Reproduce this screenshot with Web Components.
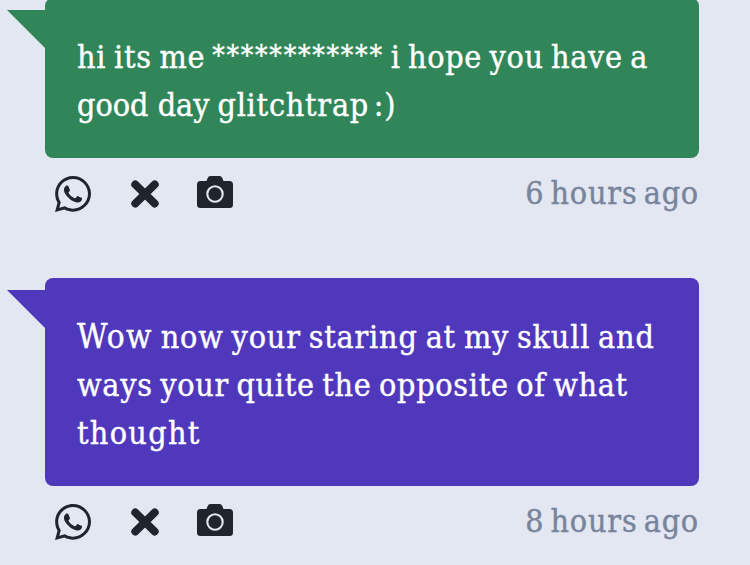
<!DOCTYPE html>
<html lang="en">
<head>
<meta charset="utf-8">
<title>Messages</title>
<style>
    body {
        margin: 0;
        height: 565px;
        overflow: hidden;
        background: #e2e7f1;
        font-family: 'DejaVu Serif Condensed', 'DejaVu Serif', serif;
        font-stretch: condensed;
        font-size: 32px;
        line-height: 48px;
    }
</style>
</head>
<body>
<message-list>
    <message-card time="6 hours ago" style="--bubble: #308658">
        <text-line><text-run ls="0.7" ws="-2">hi its me</text-run><text-run ls="1.7" size="28" lead="7" rise="1">************</text-run><text-run ls="0.7" ws="-2.5" lead="7">i hope you have a</text-run></text-line>
        <text-line><text-run>good day</text-run><text-run ls="0.75" ws="-5" lead="8">glitchtrap :)</text-run></text-line>
    </message-card>
    <message-card time="8 hours ago" style="--bubble: #5038bd">
        <text-line><text-run ls="1.4" size="33">Wow</text-run><text-run ls="0.8" ws="-2" lead="8">now your staring at my skull and</text-run></text-line>
        <text-line><text-run ls="0.7" ws="-2.3">ways your quite the opposite of what</text-run></text-line>
        <text-line><text-run ls="1.3">thought</text-run></text-line>
    </message-card>
</message-list>

<script>
const ICONS = {
    whatsapp: `
        <svg width="36" height="36" viewBox="0 32 448 448">
            <path d="M380.9 97.1C339 55.1 283.2 32 223.9 32c-122.4 0-222 99.6-222 222 0 39.1 10.2 77.3 29.6 111L0 480l117.7-30.9c32.4 17.7 68.9 27 106.1 27h.1c122.3 0 224.1-99.6 224.1-222 0-59.3-25.2-115-67.1-157zm-157 341.6c-33.2 0-65.7-8.9-94-25.7l-6.7-4-69.8 18.3L72 359.2l-4.4-7c-18.5-29.4-28.2-63.3-28.2-98.2 0-101.7 82.8-184.5 184.6-184.5 49.3 0 95.6 19.2 130.4 54.1 34.8 34.9 56.2 81.2 56.1 130.5 0 101.8-84.9 184.6-186.6 184.6z"/>
            <path d="M325.1 300.5c-5.5-2.8-32.8-16.2-37.9-18-5.1-1.9-8.8-2.8-12.5 2.8-3.7 5.6-14.3 18-17.6 21.8-3.2 3.7-6.5 4.2-12 1.4-32.6-16.3-54-29.1-75.5-66-5.7-9.8 5.7-9.1 16.3-30.3 1.8-3.7.9-6.9-.5-9.7-1.4-2.8-12.5-30.1-17.1-41.2-4.5-10.8-9.1-9.3-12.5-9.5-3.2-.2-6.9-.2-10.6-.2-3.7 0-9.7 1.4-14.8 6.9-5.1 5.6-19.4 19-19.4 46.3 0 27.3 19.9 53.7 22.6 57.4 2.8 3.7 39.1 59.7 94.8 83.8 35.2 15.2 49 16.5 66.6 13.9 10.7-1.6 32.8-13.4 37.4-26.4 4.6-13 4.6-24.1 3.2-26.4-1.3-2.5-5-3.9-10.5-6.6z"/>
        </svg>`,
    cross: `
        <svg width="30" height="36" viewBox="0 0 30 36">
            <path d="M5.2 8.4 24.8 27.6M24.8 8.4 5.2 27.6" fill="none" stroke="currentColor" stroke-width="7.8" stroke-linecap="round"/>
        </svg>`,
    camera: `
        <svg width="36" height="32" viewBox="0 0 36 32">
            <path d="M3.5 5H9.5l1.2-3A3 3 0 0 1 13.5 0h9a3 3 0 0 1 2.8 2l1.2 3h6A3.5 3.5 0 0 1 36 8.5v20a3.5 3.5 0 0 1-3.5 3.5h-29A3.5 3.5 0 0 1 0 28.5v-20A3.5 3.5 0 0 1 3.5 5z"/>
            <circle cx="18" cy="18" r="7.7" fill="none" stroke="#e2e7f1" stroke-width="2.1"/>
        </svg>`
};

class ShareIcon extends HTMLElement {
    constructor() {
        super();
        this.attachShadow({ mode: 'open' });
    }

    connectedCallback() {
        this.shadowRoot.innerHTML = `
            <style>
                :host { display: block; color: #20242c; }
                svg { display: block; fill: currentColor; }
            </style>
            ${ICONS[this.getAttribute('name')]}
        `;
    }
}

// A piece of a line with its own tracking
class TextRun extends HTMLElement {
    constructor() {
        super();
        this.attachShadow({ mode: 'open' });
    }

    connectedCallback() {
        const value = (name, fallback) => this.getAttribute(name) || fallback;
        this.shadowRoot.innerHTML = `
            <style>
                :host {
                    display: block;
                    white-space: nowrap;
                    margin-left: ${value('lead', 0)}px;
                    padding-bottom: ${value('rise', 0)}px;
                    margin-top: -${value('rise', 0)}px;
                    font-size: ${value('size', 32)}px;
                    letter-spacing: ${value('ls', 0)}px;
                    word-spacing: ${value('ws', 0)}px;
                    -webkit-text-stroke: 0.4px currentColor;
                }
            </style>
            <slot></slot>
        `;
    }
}

class TextLine extends HTMLElement {
    constructor() {
        super();
        this.attachShadow({ mode: 'open' });
        this.shadowRoot.innerHTML = `
            <style>
                :host { display: flex; height: 48px; }
            </style>
            <slot></slot>
        `;
    }
}

class MessageCard extends HTMLElement {
    constructor() {
        super();
        this.attachShadow({ mode: 'open' });
    }

    connectedCallback() {
        this.shadowRoot.innerHTML = `
            <style>
                :host { display: block; }

                .bubble {
                    position: relative;
                    padding: 35px 32px 29px;
                    border-radius: 8px;
                    background: var(--bubble);
                    color: #fff;
                }

                .bubble::before {
                    content: '';
                    position: absolute;
                    top: 12px;
                    left: -38px;
                    width: 38px;
                    height: 38px;
                    background: var(--bubble);
                    clip-path: polygon(0 0, 100% 0, 100% 100%);
                }

                footer {
                    display: flex;
                    align-items: flex-start;
                    height: 47px;
                    padding: 11px 0 0 10px;
                }

                .icons {
                    display: flex;
                    gap: 37px;
                    padding-top: 7px;
                }

                .icons share-icon:first-child { margin-right: 2px; }

                time {
                    margin-left: auto;
                    color: #78849b;
                }
            </style>

            <div class="bubble"><slot></slot></div>
            <footer>
                <div class="icons">
                    <share-icon name="whatsapp"></share-icon>
                    <share-icon name="cross"></share-icon>
                    <share-icon name="camera"></share-icon>
                </div>
                <time><text-run ls="0.8" ws="-3.7">${this.getAttribute('time')}</text-run></time>
            </footer>
        `;
    }
}

class MessageList extends HTMLElement {
    constructor() {
        super();
        this.attachShadow({ mode: 'open' });
        this.shadowRoot.innerHTML = `
            <style>
                :host {
                    display: flex;
                    flex-direction: column;
                    gap: 62px;
                    width: 654px;
                    margin: -2px 0 0 45px;
                }
            </style>
            <slot></slot>
        `;
    }
}

customElements.define('share-icon', ShareIcon);
customElements.define('text-run', TextRun);
customElements.define('text-line', TextLine);
customElements.define('message-card', MessageCard);
customElements.define('message-list', MessageList);
</script>
</body>
</html>
